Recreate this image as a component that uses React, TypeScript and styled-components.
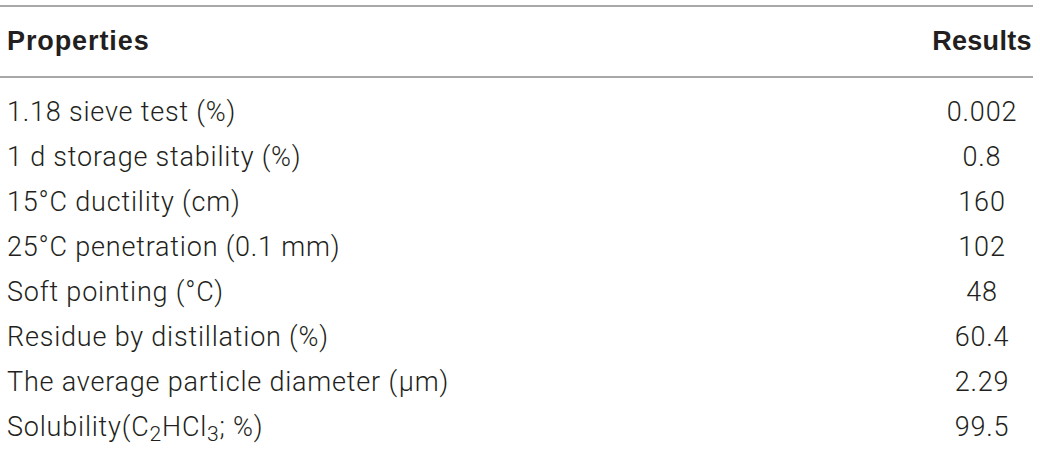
import React from "react";
import styled, { createGlobalStyle } from "styled-components";

const Global = createGlobalStyle`
  html, body { margin: 0; padding: 0; background: #fff; }
  body { font-family: Roboto, "Liberation Sans", Arial, sans-serif; color: #231f20; }
`;

const Table = styled.table`
  width: 1033px;
  border-collapse: collapse;
  margin-top: 5px;
  border-top: 2px solid #a8a8a8;
  font-size: 27px;
`;

const HeadRow = styled.tr`
  border-bottom: 2px solid #a8a8a8;
`;

const Th = styled.th<{ $right?: boolean }>`
  font-family: "Liberation Sans", Arial, sans-serif;
  font-weight: 700;
  text-align: ${(p) => (p.$right ? "center" : "left")};
  width: ${(p) => (p.$right ? "102px" : "auto")};
  padding: 12px 0 12px ${(p) => (p.$right ? "0" : "7px")};
  line-height: 45px;
  letter-spacing: ${(p) => (p.$right ? "0.3px" : "0.9px")};
`;

const Td = styled.td<{ $right?: boolean }>`
  font-weight: 300;
  text-align: ${(p) => (p.$right ? "center" : "left")};
  padding: 0 0 0 ${(p) => (p.$right ? "0" : "7px")};
  line-height: 45px;
  height: 45px;
  letter-spacing: 0.8px;
  white-space: nowrap;
`;

const FirstRow = styled.tr`
  & > td { padding-top: 12px; }
`;

const Sub = styled.sub`
  font-size: 0.78em;
  line-height: 0;
  vertical-align: -0.24em;
`;

const Mu = styled.span`
  margin-left: 1px;
`;

const rows: [React.ReactNode, string][] = [
  ["1.18 sieve test (%)", "0.002"],
  ["1 d storage stability (%)", "0.8"],
  ["15°C ductility (cm)", "160"],
  ["25°C penetration (0.1 mm)", "102"],
  ["Soft pointing (°C)", "48"],
  ["Residue by distillation (%)", "60.4"],
  [
    <>
      The average particle diameter (<Mu>μ</Mu>m)
    </>,
    "2.29",
  ],
  [
    <>
      Solubility(C<Sub>2</Sub>HCl<Sub>3</Sub>; %)
    </>,
    "99.5",
  ],
];

export default function App() {
  return (
    <>
      <Global />
      <Table>
        <thead>
          <HeadRow>
            <Th>Properties</Th>
            <Th $right>Results</Th>
          </HeadRow>
        </thead>
        <tbody>
          {rows.map(([k, v], i) => {
            const R = i === 0 ? FirstRow : "tr";
            return (
              <R key={i}>
                <Td>{k}</Td>
                <Td $right>{v}</Td>
              </R>
            );
          })}
        </tbody>
      </Table>
    </>
  );
}
